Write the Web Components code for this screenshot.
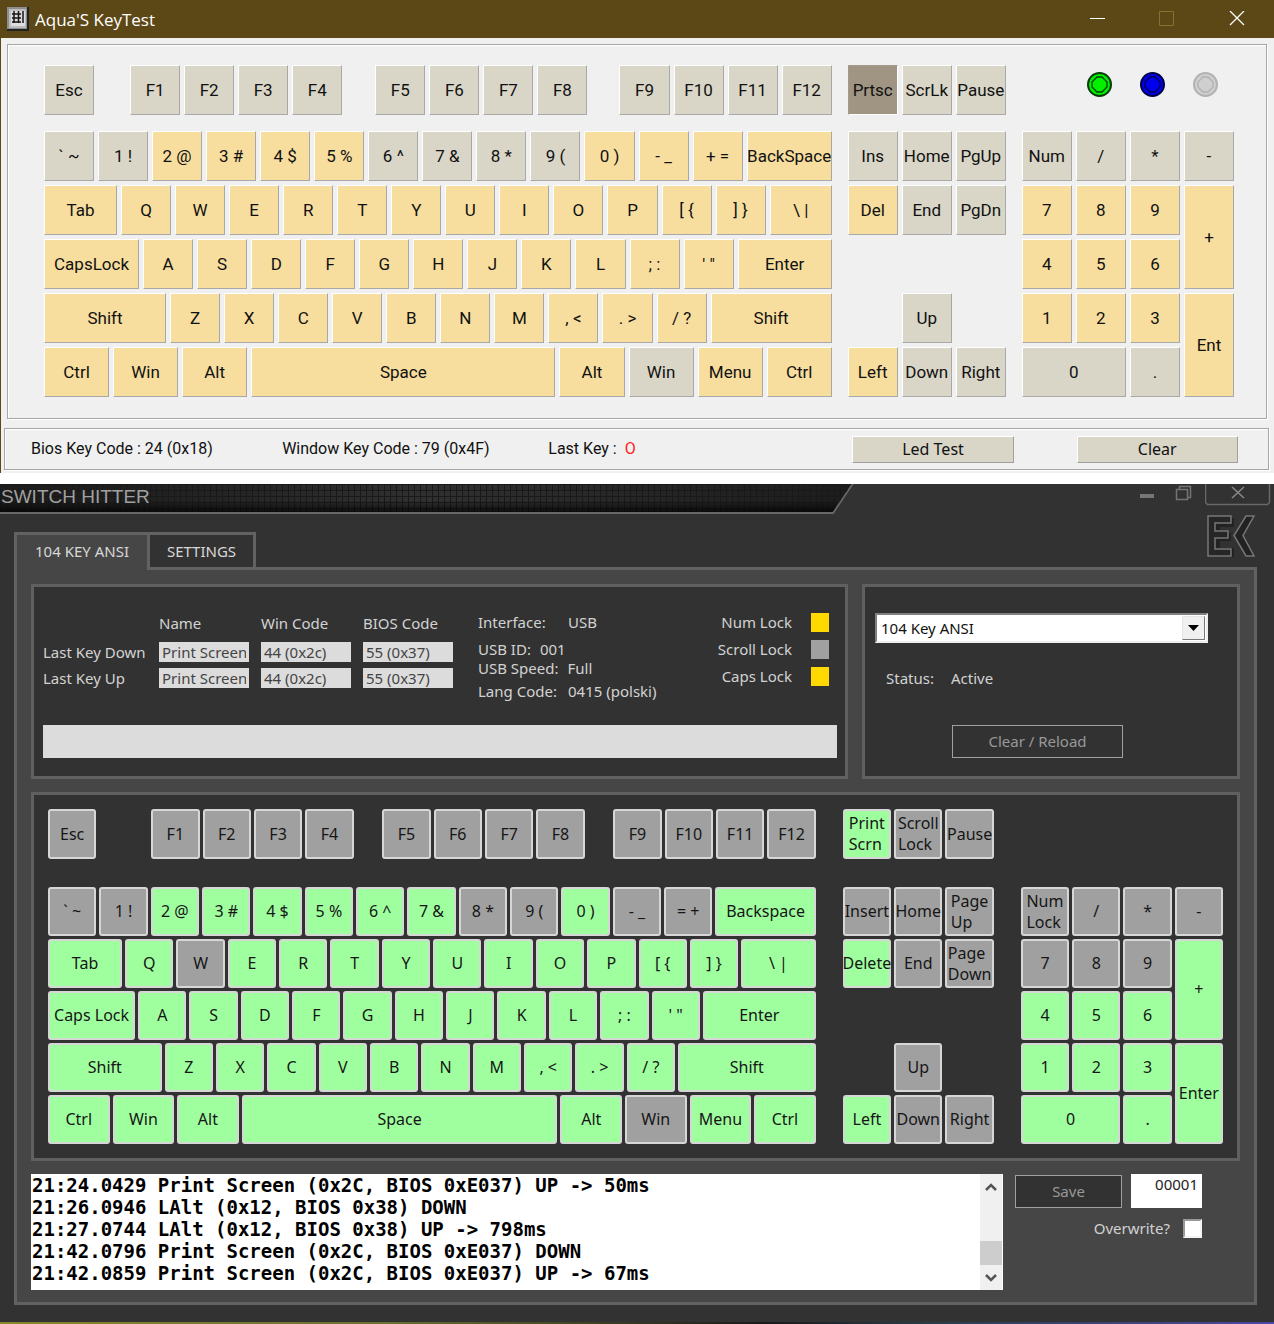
<!DOCTYPE html>
<html lang="en">
<head>
<meta charset="utf-8">
<title>Keyboard testers</title>
<style>
  body { margin: 0; background: #fff; font-family: "Liberation Sans", Arial, sans-serif; }
</style>
</head>
<body>
<tester-page></tester-page>

<script>
const define = (name, html, setup) => customElements.define(name, class extends HTMLElement {
  constructor() {
    super();
    this.attachShadow({ mode: "open" }).innerHTML = html;
  }
  connectedCallback() { if (setup) setup(this, this.shadowRoot); }
});

/* One key. Attributes: label (|br| breaks the line), state (on | held). */
define("key-cap", `
<style>
  :host { display: block; min-width: 0; min-height: 0; }
  button {
    display: flex; align-items: center; justify-content: center;
    box-sizing: border-box; width: 100%; height: 100%; margin: 0; padding: 0;
    font: inherit; color: inherit; white-space: pre; text-align: left;
    background: var(--key-off); border: var(--key-border); border-color: var(--key-edge);
    border-radius: var(--key-radius);
  }
  :host([state="on"]) button { background: var(--key-on); }
  :host([state="held"]) button { background: var(--key-held); border-color: #a09a90 #fff #fff #a09a90; }
</style>
<button type="button"></button>`, (host, root) => {
  root.querySelector("button").textContent = host.getAttribute("label").replaceAll("|br|", "\n");
});

/* Keys: "label" is idle, "*label" has been pressed, "!label" is held down. */
const makeKey = (text) => {
  const key = document.createElement("key-cap");
  const mark = text[0];
  const marked = text.length > 1 && (mark === "*" || mark === "!");
  if (marked) key.setAttribute("state", mark === "*" ? "on" : "held");
  key.setAttribute("label", marked ? text.slice(1) : text);
  return key;
};

const LAYOUTS = {
  aqua: {
    unit: 50,
    fn: ["Esc", 28, "F1", "F2", "F3", "F4", 25, "F5", "F6", "F7", "F8", 24, "F9", "F10", "F11", "F12"],
    rows: [
      ["` ~", "1 !", "*2 @", "*3 #", "*4 $", "*5 %", "6 ^", "7 &", "8 *", "9 (", "*0 )", "*- _", "*+ =", ["*BackSpace", 85]],
      [["*Tab", 73], "*Q", "*W", "*E", "*R", "*T", "*Y", "*U", "*I", "*O", "*P", "*[ {", "*] }", ["*\\ |", 62]],
      [["*CapsLock", 95], "*A", "*S", "*D", "*F", "*G", "*H", "*J", "*K", "*L", "*; :", "*' \"", ["*Enter", 94]],
      [["*Shift", 122], "*Z", "*X", "*C", "*V", "*B", "*N", "*M", "*, <", "*. >", "*/ ?", ["*Shift", 121]],
      [["*Ctrl", 65], ["*Win", 65], ["*Alt", 65], ["*Space", 304], ["*Alt", 65], ["Win", 65], ["*Menu", 65], ["*Ctrl", 65]]
    ],
    navTop: ["!Prtsc", "ScrLk", "Pause"],
    nav: [["Ins", 1, 1], ["Home", 2, 1], ["PgUp", 3, 1], ["*Del", 1, 2], ["End", 2, 2], ["PgDn", 3, 2],
          ["Up", 2, 4], ["*Left", 1, 5], ["Down", 2, 5], ["Right", 3, 5]],
    num: [["Num", 1, 1], ["/", 2, 1], ["*", 3, 1], ["-", 4, 1], ["*7", 1, 2], ["*8", 2, 2], ["*9", 3, 2], ["*+", 4, "2 / span 2"],
          ["*4", 1, 3], ["*5", 2, 3], ["*6", 3, 3], ["*1", 1, 4], ["*2", 2, 4], ["*3", 3, 4], ["*Ent", 4, "4 / span 2"],
          ["0", "1 / span 2", 5], [".", 3, 5]]
  },
  hitter: {
    unit: 483,
    fn: ["Esc", 487, "F1", "F2", "F3", "F4", 225, "F5", "F6", "F7", "F8", 225, "F9", "F10", "F11", "F12"],
    rows: [
      ["` ~", "1 !", "*2 @", "*3 #", "*4 $", "*5 %", "*6 ^", "*7 &", "8 *", "9 (", "*0 )", "- _", "= +", ["*Backspace", 1001]],
      [["*Tab", 740], "*Q", "W", "*E", "*R", "*T", "*Y", "*U", "*I", "*O", "*P", "*[ {", "*] }", ["*\\ |", 744]],
      [["*Caps Lock", 870], "*A", "*S", "*D", "*F", "*G", "*H", "*J", "*K", "*L", "*; :", "*' \"", ["*Enter", 1127]],
      [["*Shift", 1135], "*Z", "*X", "*C", "*V", "*B", "*N", "*M", "*, <", "*. >", "*/ ?", ["*Shift", 1375]],
      [["*Ctrl", 615], ["*Win", 615], ["*Alt", 615], ["*Space", 3155], ["*Alt", 615], ["Win", 615], ["*Menu", 615], ["*Ctrl", 615]]
    ],
    navTop: ["*Print|br|Scrn", "Scroll|br|Lock", "Pause"],
    nav: [["Insert", 1, 1], ["Home", 2, 1], ["Page|br|Up", 3, 1], ["*Delete", 1, 2], ["End", 2, 2], ["Page|br|Down", 3, 2],
          ["Up", 2, 4], ["*Left", 1, 5], ["Down", 2, 5], ["Right", 3, 5]],
    num: [["Num|br|Lock", 1, 1], ["/", 2, 1], ["*", 3, 1], ["-", 4, 1], ["7", 1, 2], ["8", 2, 2], ["9", 3, 2], ["*+", 4, "2 / span 2"],
          ["*4", 1, 3], ["*5", 2, 3], ["*6", 3, 3], ["*1", 1, 4], ["*2", 2, 4], ["*3", 3, 4], ["*Enter", 4, "4 / span 2"],
          ["*0", "1 / span 2", 5], ["*.", 3, 5]]
  }
};

define("key-board", `
<style>
  :host { display: grid; grid-template-columns: var(--board-cols); column-gap: var(--cluster-gap); row-gap: var(--fn-gap);
          grid-template-rows: var(--fn-height) var(--block-height); }
  .row { display: flex; gap: var(--key-gap); min-height: 0; min-width: 0; }
  .rows { display: grid; grid-template-rows: repeat(5, minmax(0, 1fr)); gap: var(--key-gap); min-width: 0; }
  .pad { display: grid; grid-template-rows: repeat(5, minmax(0, 1fr)); gap: var(--key-gap); }
  .three { grid-template-columns: repeat(3, minmax(0, 1fr)); }
  .four { grid-template-columns: repeat(4, minmax(0, 1fr)); }
  .top { display: grid; gap: var(--key-gap); }
</style>
<div class="row fn"></div>
<div class="top three"></div>
<slot></slot>
<div class="rows"></div>
<div class="pad three"></div>
<div class="pad four"></div>`, (host, root) => {
  const layout = LAYOUTS[host.getAttribute("layout")];
  const fill = (row, items) => items.forEach((item) => {
    const [text, width] = Array.isArray(item) ? item : [item, layout.unit];
    const el = typeof text === "number" ? document.createElement("span") : makeKey(text);
    el.style.flex = (typeof text === "number" ? text : width) + " 1 0";
    row.append(el);
  });
  const place = (pad, items) => items.forEach(([text, col, row]) => {
    const key = makeKey(text);
    key.style.gridColumn = col;
    key.style.gridRow = row;
    pad.append(key);
  });
  fill(root.querySelector(".fn"), layout.fn);
  layout.navTop.forEach((text) => root.querySelector(".top").append(makeKey(text)));
  layout.rows.forEach((items) => {
    const row = document.createElement("div");
    row.className = "row";
    fill(row, items);
    root.querySelector(".rows").append(row);
  });
  place(root.querySelector(".pad.three"), layout.nav);
  place(root.querySelector(".pad.four"), layout.num);
});

define("status-led", `
<style>
  :host { display: block; width: 25px; height: 25px; }
  svg { display: block; }
</style>
<svg width="25" height="25" viewBox="0 0 25 25">
  <circle cx="12.5" cy="12.5" r="11.5" fill="var(--led)" stroke="var(--ring)" stroke-width="2"/>
  <path d="M10 5h5l5 5v5l-5 5h-5l-5-5v-5z" fill="var(--led)" stroke="var(--ring)" stroke-width="1.300"/>
</svg>`);

define("aqua-window", `
<style>
  :host { display: block; font: 17px Roboto, sans-serif; color: #111; }
  header { display: flex; align-items: center; height: 38px; padding: 0 29px 0 7px; gap: 6px;
           background: #5c4817; color: #fff; font: 17px "Open Sans", sans-serif; }
  h1 { flex: 1; margin: 0; font: inherit; }
  nav { display: flex; gap: 54px; }
  nav button { display: block; padding: 0; border: 0; background: none; width: 16px; height: 16px; }
  svg { display: block; }
  main { background: #f0f0f0; border-left: 1px solid #5c4817; padding: 6px 5px 3px 3px; }
  section { border: 1px solid #a6a6a6; box-shadow: inset 1px 1px #fff, 1px 1px #fff; }
  .board { margin: 0 2px 9px 3px; padding: 20px 32px 21px 36px; }
  key-board {
    --board-cols: minmax(0, 787fr) minmax(0, 158fr) minmax(0, 212fr);
    --cluster-gap: 16px; --fn-gap: 16px; --fn-height: 50px; --block-height: 266px; --key-gap: 4px;
    --key-off: #d9d6c7; --key-on: #f7de9e; --key-held: #a09582;
    --key-border: 1px solid; --key-edge: #fff #a8a8a8 #a8a8a8 #fff; --key-radius: 0;
  }
  .leds { display: flex; justify-content: flex-end; gap: 28px; padding: 7px 16px 0 0; }
  .status { display: flex; align-items: center; height: 40px; padding: 0 30px 0 26px; font-size: 16px; }
  .status p { margin: 0; line-height: 20px; white-space: pre; }
  .status p:nth-of-type(1) { flex: 252 1 0; }
  .status p:nth-of-type(2) { flex: 267 1 0; }
  .status p:nth-of-type(3) { flex: 305 1 0; }
  .last { color: #f22; }
  .cmd { flex: 160 1 0; height: 27px; padding: 0; background: #d9d6c7; font: 16px "Noto Sans", sans-serif; color: #111;
         border: 1px solid; border-color: #fff #a0a0a0 #a0a0a0 #fff; }
  .gap { flex: 63 1 0; }
</style>
<header>
  <svg width="22" height="24" viewBox="0 0 22 24">
    <path d="M0 0h22v24H0z" fill="#222"/><path d="M0 0h20v22H0z" fill="#8d8d8d"/><path d="M2 2h17v19H2z" fill="#bdbdbd"/>
    <path d="M4 4h14v15H4z" fill="#ddd"/>
    <path d="M5 7h9M5 11h9M5 15h9M7 4v12M11.500 4v12M16 4v12" stroke="#151515" stroke-width="1.500" fill="none"/>
  </svg>
  <h1>Aqua'S KeyTest</h1>
  <nav>
    <button type="button" aria-label="Minimize"><svg width="16" height="16"><path d="M1 7.500h15" stroke="#fff"/></svg></button>
    <button type="button" aria-label="Maximize" disabled><svg width="16" height="16"><path d="M.5 .5h14v14H.5z" stroke="#8b7130" fill="none"/></svg></button>
    <button type="button" aria-label="Close"><svg width="16" height="16"><path d="M1 0l14 14M15 0L1 14" stroke="#fff" stroke-width="1.300"/></svg></button>
  </nav>
</header>
<main>
  <section class="board">
    <key-board layout="aqua">
      <div class="leds">
        <status-led style="--led:#00f000;--ring:#063c06"></status-led>
        <status-led style="--led:#0000ee;--ring:#00004a"></status-led>
        <status-led style="--led:#cfcfcf;--ring:#b2b2b2"></status-led>
      </div>
    </key-board>
  </section>
  <section class="status">
    <p>Bios Key Code : 24 (0x18)</p>
    <p>Window Key Code : 79 (0x4F)</p>
    <p>Last Key :  <span class="last">O</span></p>
    <button class="cmd" type="button">Led Test</button>
    <span class="gap"></span>
    <button class="cmd" type="button">Clear</button>
  </section>
</main>`);

define("frame-box", `
<style>
  :host { display: block; box-sizing: border-box; border: 3px solid #606060; background: #323232; min-width: 0; }
</style>
<slot></slot>`);

define("device-info", `
<style>
  :host { display: block; }
  .top { display: flex; align-items: flex-start; height: 112px; }
  table { border-collapse: collapse; margin-right: 13px; }
  th, td { padding: 0; font-weight: 400; text-align: left; vertical-align: top; line-height: 20px; white-space: nowrap; }
  thead th { height: 29px; }
  tbody tr { height: 26px; }
  th:first-child { width: 116px; }
  td, thead th { width: 90px; padding-right: 12px; }
  thead th:first-child { padding: 0; }
  td input { display: block; box-sizing: border-box; width: 90px; height: 20px; border: 0; padding: 0 3px; background: #dcdcdc; color: #444; font: inherit; }
  dl { display: grid; grid-template-columns: 90px auto; margin: 0; flex: 1; align-content: start; line-height: 19px; white-space: nowrap; }
  dt, dd { margin: 0; }
  .wide { grid-column: 1 / -1; display: flex; gap: 9px; }
  .first { margin-bottom: 8px; }
  .last { margin-top: 4px; }
  ul { list-style: none; margin: 0; padding: 0 8px 0 0; display: grid; gap: 8px; align-content: start; }
  li { display: flex; justify-content: flex-end; gap: 19px; line-height: 19px; height: 19px; }
  i { width: 18px; height: 19px; background: #a0a0a0; }
  i.on { background: #ffd900; }
  .typed { display: block; box-sizing: border-box; width: 100%; height: 33px; border: 0; padding: 0 4px; background: #dcdcdc; font: inherit; }
</style>
<div class="top">
  <table>
    <thead><tr><th></th><th>Name</th><th>Win Code</th><th>BIOS Code</th></tr></thead>
    <tbody>
      <tr><th>Last Key Down</th><td><input readonly aria-label="Name, key down" value="Print Screen"></td><td><input readonly aria-label="Win code, key down" value="44 (0x2c)"></td><td><input readonly aria-label="BIOS code, key down" value="55 (0x37)"></td></tr>
      <tr><th>Last Key Up</th><td><input readonly aria-label="Name, key up" value="Print Screen"></td><td><input readonly aria-label="Win code, key up" value="44 (0x2c)"></td><td><input readonly aria-label="BIOS code, key up" value="55 (0x37)"></td></tr>
    </tbody>
  </table>
  <dl>
    <dt class="first">Interface:</dt><dd class="first">USB</dd>
    <div class="wide"><dt>USB ID:</dt><dd>001</dd></div>
    <div class="wide"><dt>USB Speed:</dt><dd>Full</dd></div>
    <dt class="last">Lang Code:</dt><dd class="last">0415 (polski)</dd>
  </dl>
  <ul>
    <li>Num Lock<i class="on"></i></li>
    <li>Scroll Lock<i></i></li>
    <li>Caps Lock<i class="on"></i></li>
  </ul>
</div>
<input class="typed" aria-label="Typed text">`);

define("layout-picker", `
<style>
  :host { display: block; }
  .combo { display: grid; box-sizing: border-box; height: 30px; margin-right: 20px; border: 2px solid; border-color: #808080 #eee #eee #808080; background: #fff; }
  select { grid-area: 1 / 1; appearance: none; border: 0; margin: 0; padding: 0 4px 1px; background: none; font: inherit; color: #111; }
  .drop { grid-area: 1 / 1; justify-self: end; pointer-events: none; width: 23px; box-sizing: border-box; margin: 1px 1px 1px 0;
          display: grid; place-items: center; background: #f0f0f0; border: 1px solid; border-color: #e4e4e4 #777 #777 #e4e4e4; }
  dl { display: flex; gap: 17px; margin: 25px 0 37px 11px; line-height: 20px; }
  dd { margin: 0; }
  button { display: block; box-sizing: border-box; width: 171px; height: 33px; margin-left: 77px; padding: 0 0 2px; font: inherit;
           color: #999; background: #323232; border: 1px solid #a0a0a0; }
</style>
<div class="combo">
  <select aria-label="Keyboard layout"><option>104 Key ANSI</option></select>
  <span class="drop"><svg width="11" height="6"><path d="M0 0h11L5.500 6z"/></svg></span>
</div>
<dl><dt>Status:</dt><dd>Active</dd></dl>
<button type="button">Clear / Reload</button>`);

define("event-log", `
<style>
  :host { display: flex; min-width: 0; height: 116px; background: #fff; }
  textarea { flex: 1; min-width: 0; box-sizing: border-box; border: 0; margin: 0; padding: 0 1px; resize: none; overflow: hidden; background: #fff;
             color: #000; font: bold 19px/22px "DejaVu Sans Mono", monospace; white-space: pre; }
  .scroll { display: flex; flex-direction: column; align-items: center; width: 22px; margin-right: 1px; background: #f0f0f0; }
  .scroll button { border: 0; padding: 0; width: 100%; height: 25px; background: none; display: grid; place-items: center; }
  .track { flex: 1; width: 100%; display: flex; align-items: flex-end; }
  .thumb { width: 100%; height: 24px; background: #cdcdcd; }
</style>
<textarea readonly aria-label="Event log">21:24.0429 Print Screen (0x2C, BIOS 0xE037) UP -&gt; 50ms
21:26.0946 LAlt (0x12, BIOS 0x38) DOWN
21:27.0744 LAlt (0x12, BIOS 0x38) UP -&gt; 798ms
21:42.0796 Print Screen (0x2C, BIOS 0xE037) DOWN
21:42.0859 Print Screen (0x2C, BIOS 0xE037) UP -&gt; 67ms</textarea>
<div class="scroll">
  <button type="button" aria-label="Scroll up"><svg width="12" height="8"><path d="M1 7l5-5 5 5" fill="none" stroke="#555" stroke-width="2.500"/></svg></button>
  <div class="track"><div class="thumb"></div></div>
  <button type="button" aria-label="Scroll down"><svg width="12" height="8"><path d="M1 1l5 5 5-5" fill="none" stroke="#555" stroke-width="2.500"/></svg></button>
</div>`);

define("save-panel", `
<style>
  :host { display: block; width: 187px; }
  .line { display: flex; justify-content: space-between; align-items: center; }
  button { box-sizing: border-box; width: 107px; height: 33px; padding: 0; font: inherit; color: #999; background: #323232; border: 1px solid #a0a0a0; }
  .count { box-sizing: border-box; width: 71px; height: 34px; border: 0; padding: 0 4px 14px; text-align: right; background: #fff; color: #222; font: inherit; }
  label { display: flex; justify-content: flex-end; align-items: center; gap: 13px; margin-top: 10px; line-height: 20px; }
  .tick { appearance: none; box-sizing: border-box; width: 19px; height: 19px; margin: 0; background: #fff; border: 2px solid; border-color: #999 #f4f4f4 #f4f4f4 #999; }
</style>
<div class="line"><button type="button">Save</button><input class="count" aria-label="File number" value="00001"></div>
<label>Overwrite?<input class="tick" type="checkbox"></label>`);

define("hitter-window", `
<style>
  :host { display: block; background: #323232; color: #d2d2d2; font: 15px "Noto Sans", sans-serif; }
  header { display: flex; justify-content: space-between; align-items: flex-start; height: 31px; }
  .bar { flex: 0 0 67%; height: 30px; background: #686868; clip-path: polygon(0 0, 100% 0, calc(100% - 20px) 100%, 0 100%); }
  .mesh { box-sizing: border-box; height: 28px; margin-right: 2px; padding: 0 0 3px 1px; display: flex; align-items: center;
          clip-path: polygon(0 0, 100% 0, calc(100% - 19px) 100%, 0 100%);
          background:
            linear-gradient(rgba(0,0,0,0) 60%, rgba(0,0,0,.7)),
            repeating-linear-gradient(90deg, #191919 0 1px, transparent 1px 6px),
            repeating-linear-gradient(#191919 0 1px, transparent 1px 6px),
            linear-gradient(90deg, #1c1c1c, #1f1f1f 15%, #303030 50%, #1c1c1c); }
  h1 { margin: 0; font: 19px "Liberation Sans", sans-serif; color: #a0a0a0; }
  .controls { display: flex; padding-right: 3px; }
  .controls button { display: block; padding: 0; border: 0; background: none; }
  svg { display: block; }
  .tabs { display: flex; align-items: flex-end; justify-content: space-between; height: 52px; margin: 0 17px 0 14px; }
  .tabs div { display: flex; align-items: flex-end; }
  .tab { box-sizing: border-box; height: 35px; padding: 0; border: 3px solid #626262; border-bottom: 0; background: #323232; color: #d8d8d8; font: inherit; }
  .tab.on { width: 133px; background: #464646; margin-bottom: -3px; height: 38px; padding-bottom: 3px; border-right: 0; position: relative; }
  .tab.off { width: 109px; }
  .logo { align-self: flex-end; margin-bottom: 7px; }
  .page { display: grid; gap: 13px; margin: 0 17px 0 14px; padding: 14px 14px 12px; border: 3px solid #626262; background: #464646; }
  .info { display: grid; grid-template-columns: minmax(0, 817fr) minmax(0, 378fr); gap: 14px; }
  .info frame-box { height: 195px; }
  .left { padding: 26px 8px 0 9px; }
  .right { padding: 26px 9px 0 10px; }
  .keys { padding: 14px; color: #161616; font-size: 16px; line-height: 21px; }
  key-board {
    --board-cols: minmax(0, 767fr) minmax(0, 151fr) minmax(0, 202fr);
    --cluster-gap: 27px; --fn-gap: 28px; --fn-height: 50px; --block-height: 257px; --key-gap: 3px;
    --key-off: #a0a0a0; --key-on: #9fff9f; --key-held: #808080;
    --key-border: 2px solid; --key-edge: #d6d6d6; --key-radius: 3px;
  }
  .foot { display: flex; justify-content: space-between; margin-right: 38px; gap: 12px; }
  event-log { flex: 1; }
  .base { height: 17px; }
  .desk { height: 2px; background: linear-gradient(90deg, #8a8530, #6c7030 30%, #1a1a1a 60%, #2a4050 75%, #4a48a0); }
</style>
<header>
  <div class="bar"><div class="mesh"><h1>SWITCH HITTER</h1></div></div>
  <div class="controls">
    <button type="button" aria-label="Minimize"><svg width="20" height="22"><path d="M0 10h14v4H0z" fill="#777"/></svg></button>
    <button type="button" aria-label="Restore"><svg width="45" height="22"><path d="M16.500 5.500h11v10h-11zM19.500 5V2.500h11v11H28" fill="none" stroke="#747474" stroke-width="1.500"/></svg></button>
    <button type="button" aria-label="Close"><svg width="66" height="22"><path d="M.5 0v18.500l2 2h60l2-2V0" fill="none" stroke="#686868" stroke-width="1.500"/><path d="M27 3l12 11M39 3L27 14" stroke="#8a8a8a" stroke-width="1.500"/></svg></button>
  </div>
</header>
<div class="tabs">
  <div><button class="tab on" type="button">104 KEY ANSI</button><button class="tab off" type="button">SETTINGS</button></div>
  <svg class="logo" width="52" height="46" viewBox="0 0 52 46">
    <path d="M5 4h24v9H15v6h11v8H15v7h14v9H5z" fill="#111" opacity=".5"/>
    <path d="M3 2h23v7H10v8h13v7H10v11h16v7H3z" fill="#262626" stroke="#777" stroke-width="1.500"/>
    <path d="M41 2h8L38 21.500 49 42h-8L29 21.500z" fill="#222" stroke="#777" stroke-width="1.500"/>
  </svg>
</div>
<div class="page">
  <div class="info">
    <frame-box><div class="left"><device-info></device-info></div></frame-box>
    <frame-box><div class="right"><layout-picker></layout-picker></div></frame-box>
  </div>
  <frame-box><div class="keys"><key-board layout="hitter"><span></span></key-board></div></frame-box>
  <div class="foot"><event-log></event-log><save-panel></save-panel></div>
</div>
<div class="base"></div>
<div class="desk"></div>`);

define("tester-page", `
<style>
  :host { display: grid; gap: 11px; }
</style>
<aqua-window></aqua-window>
<hitter-window></hitter-window>`);
</script>
</body>
</html>
